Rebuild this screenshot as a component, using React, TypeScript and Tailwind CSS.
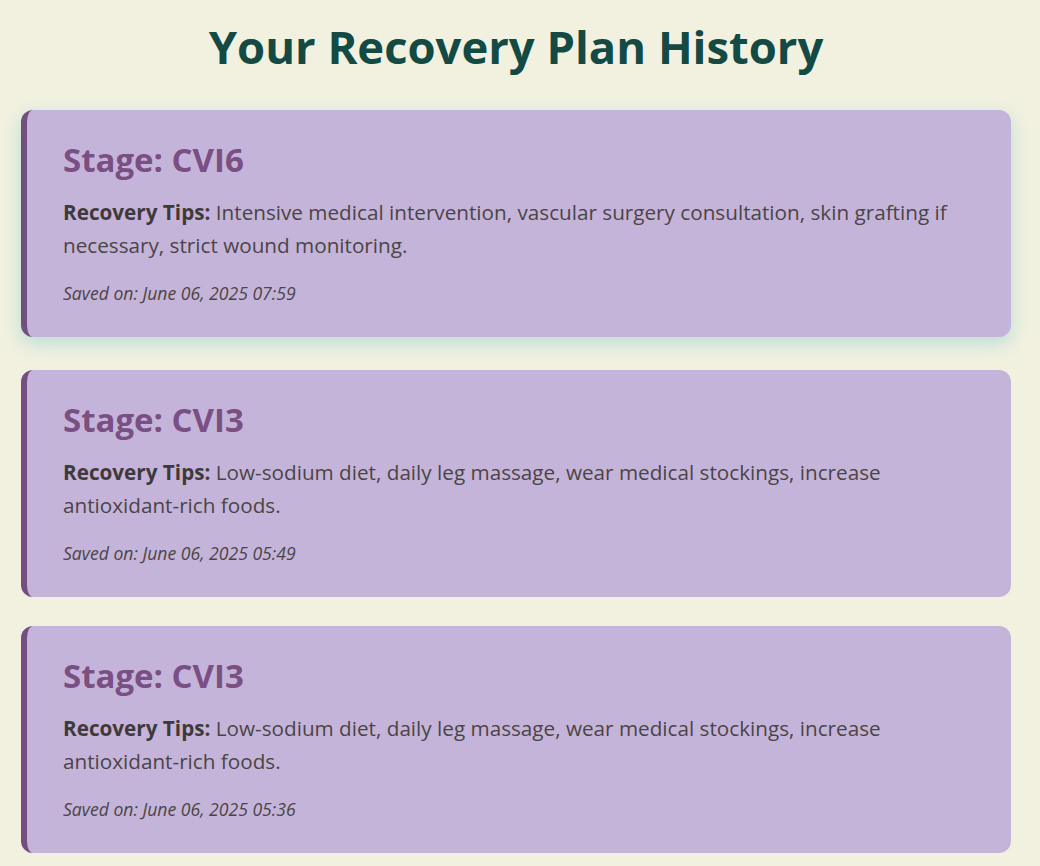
import React from 'react';

type Plan = {
  stage: string;
  tips: string;
  saved: string;
};

const plans: Plan[] = [
  {
    stage: 'CVI6',
    tips: 'Intensive medical intervention, vascular surgery consultation, skin grafting if necessary, strict wound monitoring.',
    saved: 'June 06, 2025 07:59',
  },
  {
    stage: 'CVI3',
    tips: 'Low-sodium diet, daily leg massage, wear medical stockings, increase antioxidant-rich foods.',
    saved: 'June 06, 2025 05:49',
  },
  {
    stage: 'CVI3',
    tips: 'Low-sodium diet, daily leg massage, wear medical stockings, increase antioxidant-rich foods.',
    saved: 'June 06, 2025 05:36',
  },
];

const PlanCard: React.FC<{ plan: Plan; active?: boolean }> = ({ plan, active }) => {
  return (
    <div
      className={
        active
          ? 'bg-[#c5b4da] rounded-[12px] border-l-[6px] border-[#744e80] pl-[36px] pr-[40px] pt-[30px] pb-[32px] -translate-y-[4px] shadow-[0_6px_18px_rgba(112,196,204,0.45)]'
          : 'bg-[#c5b4da] rounded-[12px] border-l-[6px] border-[#744e80] pl-[36px] pr-[40px] pt-[30px] pb-[32px]'
      }
    >
      <h3 className="text-[33px] leading-[40px] font-bold text-[#7a4f83]">Stage: {plan.stage}</h3>
      <p className="mt-[16px] text-[20.7px] leading-[33px] text-[#4a4545]">
        <strong className="font-bold text-[#3f3a3a]">Recovery Tips:</strong> {plan.tips}
      </p>
      <p className="mt-[19px] text-[17.6px] leading-[24px] italic text-[#4a4545]">Saved on: {plan.saved}</p>
    </div>
  );
};

export default function App() {
  return (
    <div
      className="min-h-screen bg-[#f2f1e0] pl-[21px] pr-[29px] pb-[20px]"
      style={{ fontFamily: '"Open Sans", "Noto Sans", sans-serif' }}
    >
      <h1 className="pt-[14px] pb-[36px] text-center text-[45.4px] leading-[64px] font-bold text-[#134a44]">
        Your Recovery Plan History
      </h1>
      <div className="flex flex-col gap-[29px]">
        {plans.map((p, i) => (
          <PlanCard key={i} plan={p} active={i === 0} />
        ))}
      </div>
    </div>
  );
}
